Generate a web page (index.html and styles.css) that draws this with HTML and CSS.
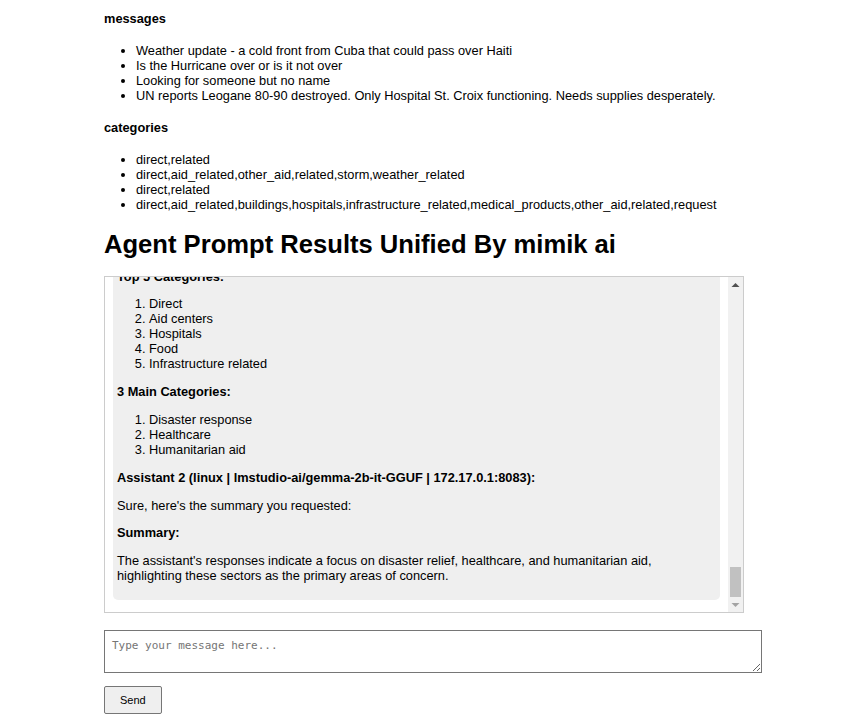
FILE: index.html
```html
<!DOCTYPE html>
<html lang="en">
<head>
<meta charset="utf-8">
<title>Agent Prompt Results Unified By mimik ai</title>
<link rel="stylesheet" href="styles.css">
</head>
<body>
<main class="page">
  <h4 class="label label-first">messages</h4>
  <ul class="list">
    <li>Weather update - a cold front from Cuba that could pass over Haiti</li>
    <li>Is the Hurricane over or is it not over</li>
    <li>Looking for someone but no name</li>
    <li>UN reports Leogane 80-90 destroyed. Only Hospital St. Croix functioning. Needs supplies desperately.</li>
  </ul>
  <h4 class="label">categories</h4>
  <ul class="list">
    <li>direct,related</li>
    <li>direct,aid_related,other_aid,related,storm,weather_related</li>
    <li>direct,related</li>
    <li>direct,aid_related,buildings,hospitals,infrastructure_related,medical_products,other_aid,related,request</li>
  </ul>
  <h1 class="title">Agent Prompt Results Unified By mimik ai</h1>
  <div class="chat">
    <div class="chat-scroll">
      <div class="chat-inner">
        <div class="bubble">
          <p><strong>Assistant 1 (linux | lmstudio-ai/gemma-2b-it-GGUF | 172.17.0.1:8082):</strong></p>
          <p>Sure, here's the analysis of the messages and categories you provided:</p>
          <p><strong>Top 5 Categories:</strong></p>
          <ol>
            <li>Direct</li>
            <li>Aid centers</li>
            <li>Hospitals</li>
            <li>Food</li>
            <li>Infrastructure related</li>
          </ol>
          <p><strong>3 Main Categories:</strong></p>
          <ol>
            <li>Disaster response</li>
            <li>Healthcare</li>
            <li>Humanitarian aid</li>
          </ol>
          <p><strong>Assistant 2 (linux | lmstudio-ai/gemma-2b-it-GGUF | 172.17.0.1:8083):</strong></p>
          <p>Sure, here's the summary you requested:</p>
          <p><strong>Summary:</strong></p>
          <p>The assistant's responses indicate a focus on disaster relief, healthcare, and humanitarian aid, highlighting these sectors as the primary areas of concern.</p>
        </div>
      </div>
    </div>
    <div class="scrollbar" aria-hidden="true">
      <div class="sb-button">
        <svg width="15" height="15" viewBox="0 0 15 15"><polygon points="3.5,10 7.5,6 11.5,10" fill="#505050"/></svg>
      </div>
      <div class="sb-track">
        <div class="sb-thumb"></div>
      </div>
      <div class="sb-button">
        <svg width="15" height="15" viewBox="0 0 15 15"><polygon points="3.5,6 11.5,6 7.5,10" fill="#a3a3a3"/></svg>
      </div>
    </div>
  </div>
  <form class="composer">
    <textarea class="input" placeholder="Type your message here..."></textarea>
    <button type="button" class="send">Send</button>
  </form>
</main>
</body>
</html>
```

FILE: styles.css
```css
html, body {
  margin: 0;
  padding: 0;
  background: #ffffff;
}

body {
  font-family: "Liberation Sans", Arial, sans-serif;
  font-size: 12.8px;
  line-height: 15px;
  color: #000000;
}

.page {
  width: 658px;
  margin-left: 104px;
  padding: 11px 0 8px;
}

.label {
  font-size: 12.8px;
  font-weight: bold;
  line-height: 15px;
  margin: 17px 0;
}

.label-first {
  margin-top: 0;
}

.list {
  margin: 13px 0;
  padding-left: 32px;
}

.title {
  font-size: 25.6px;
  line-height: 30px;
  font-weight: bold;
  margin: 17px 0;
}

.chat {
  box-sizing: border-box;
  width: 640px;
  height: 337px;
  border: 1px solid #cccccc;
  display: flex;
  margin-bottom: 17px;
}

.chat-scroll {
  flex: 1;
  min-width: 0;
  overflow: hidden;
  padding: 8px;
  display: flex;
  flex-direction: column-reverse;
}

.chat-inner {
  flex: none;
}

.bubble {
  background: #efefef;
  border-radius: 5px;
  padding: 4px;
  margin-bottom: 4px;
}

.bubble p {
  margin: 12.8px 0;
}

.bubble ol {
  margin: 12.8px 0;
  padding-left: 32px;
}

.scrollbar {
  flex: none;
  width: 15px;
  display: flex;
  flex-direction: column;
  background: #f1f1f1;
}

.sb-button {
  flex: none;
  height: 15px;
}

.sb-button svg {
  display: block;
}

.sb-track {
  flex: 1;
  display: flex;
  flex-direction: column;
  justify-content: flex-end;
}

.sb-thumb {
  height: 30px;
  margin: 0 2px;
  background: #c1c1c1;
}

.composer {
  margin: 0;
}

.input {
  display: block;
  box-sizing: border-box;
  width: 658px;
  height: 43px;
  margin: 0 0 13px;
  padding: 8px 7px;
  border: 1px solid #767676;
  border-radius: 0;
  font-family: "DejaVu Sans Mono", "Liberation Mono", monospace;
  font-size: 11px;
  line-height: 13px;
  color: #000000;
  background: #ffffff;
}

.input::placeholder {
  color: #757575;
}

.send {
  display: block;
  box-sizing: border-box;
  height: 28px;
  padding: 0 15px;
  border: 1px solid #767676;
  border-radius: 2px;
  background: #efefef;
  font-family: "Liberation Sans", Arial, sans-serif;
  font-size: 11px;
  color: #000000;
}
```
